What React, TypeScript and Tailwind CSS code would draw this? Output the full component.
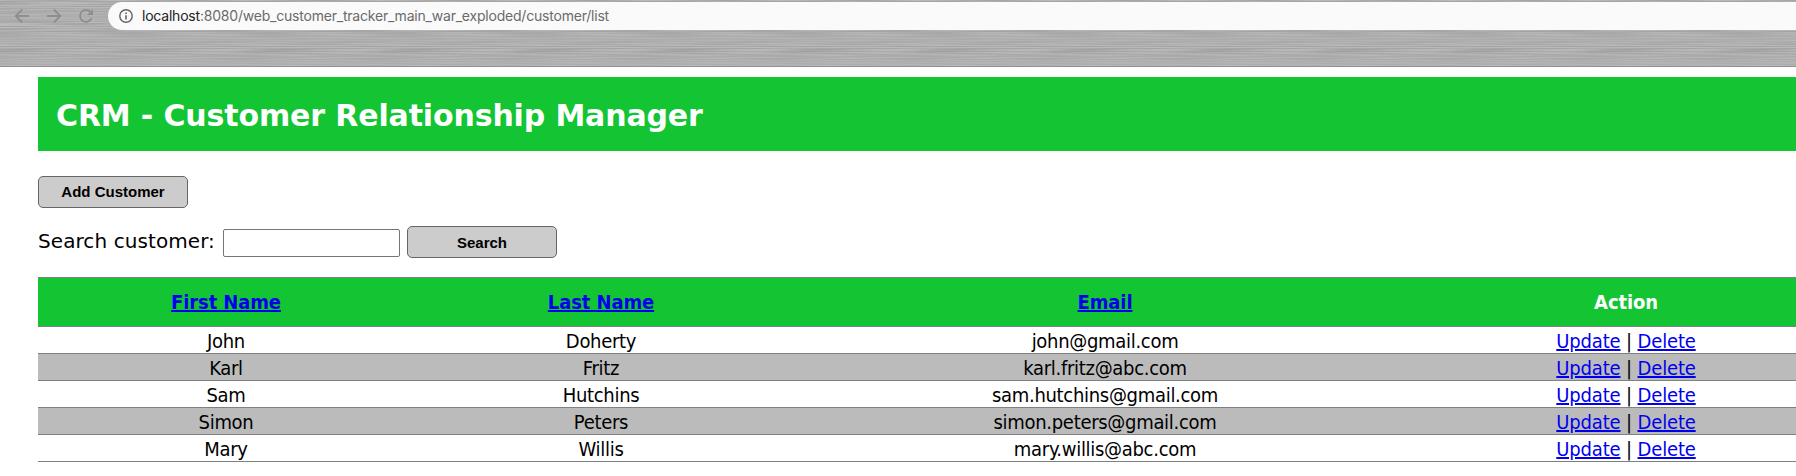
import React from "react";

const columns = "grid grid-cols-[376px_374px_634px_408px] w-[1792px] text-center";

const customers = [
  { first: "John", last: "Doherty", email: "john@gmail.com" },
  { first: "Karl", last: "Fritz", email: "karl.fritz@abc.com" },
  { first: "Sam", last: "Hutchins", email: "sam.hutchins@gmail.com" },
  { first: "Simon", last: "Peters", email: "simon.peters@gmail.com" },
  { first: "Mary", last: "Willis", email: "mary.willis@abc.com" },
];

// Horizontal scratches of one 134px wide metal tile
const streaks = Array.from({ length: 150 }, (_, i) => {
  const y = (i * 29) % 67;
  return {
    x: (y * y * 31 + i * 11) % 134,
    y,
    width: 70 + ((i * 37) % 60),
    opacity: 0.12 + ((i * 17) % 10) * 0.03,
    light: (y * 7 + (i % 3)) % 5 < 2,
  };
});

function BrushedMetal() {
  return (
    <svg className="absolute inset-0 h-full w-full" aria-hidden="true">
      <defs>
        <linearGradient id="light">
          <stop offset="0" stopColor="#cccccc" stopOpacity="0" />
          <stop offset="0.5" stopColor="#cccccc" />
          <stop offset="1" stopColor="#cccccc" stopOpacity="0" />
        </linearGradient>
        <linearGradient id="dark">
          <stop offset="0" stopColor="#8f8f8f" stopOpacity="0" />
          <stop offset="0.5" stopColor="#8f8f8f" />
          <stop offset="1" stopColor="#8f8f8f" stopOpacity="0" />
        </linearGradient>
        <pattern id="brush" width="134" height="67" patternUnits="userSpaceOnUse">
          {streaks.map((s, i) => (
            <g key={i} fill={s.light ? "url(#light)" : "url(#dark)"} opacity={s.opacity}>
              <rect x={s.x} y={s.y} width={s.width} height="1" />
              <rect x={s.x - 134} y={s.y} width={s.width} height="1" />
            </g>
          ))}
        </pattern>
      </defs>
      <rect width="100%" height="100%" fill="url(#brush)" />
    </svg>
  );
}

function BrowserBar() {
  return (
    <header className="relative h-[67px] overflow-hidden border-b border-[#929092] bg-[#b0b0b0]">
      <BrushedMetal />
      <div className="relative flex pt-[2px]">
        <div className="flex w-[108px] shrink-0 pl-[14px] pt-[6px] text-[#8e8e8e]">
          <svg width="16" height="16" viewBox="0 0 16 16" fill="none" stroke="currentColor" strokeWidth="1.8">
            <path d="M15 8H2M8.2 1.5L1.7 8l6.5 6.5" />
          </svg>
          <svg className="ml-4" width="16" height="16" viewBox="0 0 16 16" fill="none" stroke="currentColor" strokeWidth="1.8">
            <path d="M1 8h13M7.8 1.5L14.3 8l-6.5 6.5" />
          </svg>
          <svg className="ml-4" width="16" height="16" viewBox="0 0 16 16" fill="none" stroke="currentColor" strokeWidth="1.8">
            <path d="M13.6 10.2A6 6 0 1 1 12.6 4L14 5.6" />
            <path d="M15 1v6H9z" fill="currentColor" stroke="none" />
          </svg>
        </div>
        <div className="flex h-7 flex-1 items-center rounded-l-full bg-[#fafafa] pl-[11px]">
          <svg width="14" height="14" viewBox="0 0 14 14" fill="none" stroke="#5f6368" strokeWidth="1.4">
            <circle cx="7" cy="7" r="6.2" />
            <path d="M7 6.2v4.2M7 3.4v1.6" strokeWidth="1.6" />
          </svg>
          <span className="ml-[9px] whitespace-nowrap font-['Inter',sans-serif] text-[14px] leading-7 tracking-[-0.21px] text-[#6a6a6c]">
            <span className="text-[#202124]">localhost</span>:8080/web_customer_tracker_main_war_exploded/customer/list
          </span>
        </div>
      </div>
    </header>
  );
}

export default function App() {
  return (
    <div className="h-[476px] w-full overflow-hidden bg-white font-['DejaVu_Sans',sans-serif] text-black">
      <BrowserBar />
      <main className="pl-[38px]">
        <div className="mt-[10px] flex h-[74px] items-center bg-[#13c433] pl-[18px] pt-[2px]">
          <h1 className="whitespace-nowrap text-[30px] font-bold tracking-[-0.14px] text-white">CRM - Customer Relationship Manager</h1>
        </div>
        <button className="mt-[25px] block h-8 w-[150px] rounded-[5px] border border-[#666] bg-[#ccc] font-['Liberation_Sans',sans-serif] text-[15px] font-bold">
          Add Customer
        </button>
        <form className="mt-[18px] flex h-8">
          <label htmlFor="search" className="w-[185px] whitespace-nowrap text-[20px] leading-[30px] tracking-[0.08px]">
            Search customer:
          </label>
          <input id="search" className="mt-[3px] h-7 w-[177px] rounded-[2px] border border-[#767676] bg-white" />
          <button type="button" className="ml-[7px] h-8 w-[150px] rounded-[5px] border border-[#666] bg-[#ccc] pt-[2px] font-['Liberation_Sans',sans-serif] text-[15px] font-bold">
            Search
          </button>
        </form>
        <section className="mt-[19px] border-t border-[#808080] font-['DejaVu_Sans_Condensed','DejaVu_Sans',sans-serif] text-[20px]">
          <div className={columns + " h-[49px] border-b border-[#808080] bg-[#13c433] font-bold leading-[49px] tracking-[-0.12px] text-[#0000ee]"}>
            <div><a className="underline decoration-2">First Name</a></div>
            <div><a className="underline decoration-2">Last Name</a></div>
            <div><a className="underline decoration-2">Email</a></div>
            <div className="text-white">Action</div>
          </div>
          {customers.map((c) => (
            <div key={c.first} className={columns + " h-[27px] border-b border-[#808080] leading-[29px] tracking-[-0.3px] even:bg-white odd:bg-[#bbb]"}>
              <div>{c.first}</div>
              <div>{c.last}</div>
              <div>{c.email}</div>
              <div className="tracking-[-0.16px]">
                <a className="text-[#0000ee] underline">Update</a> | <a className="text-[#0000ee] underline">Delete</a>
              </div>
            </div>
          ))}
        </section>
      </main>
    </div>
  );
}
